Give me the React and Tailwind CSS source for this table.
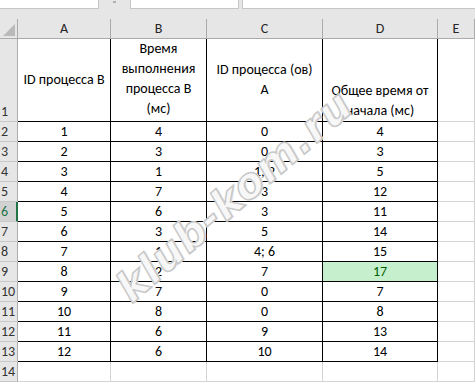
import React from "react";

const rows = [
  [1, 4, "0", 4],
  [2, 3, "0", 3],
  [3, 1, "1; 2", 5],
  [4, 7, "3", 12],
  [5, 6, "3", 11],
  [6, 3, "5", 14],
  [7, 1, "4; 6", 15],
  [8, 2, "7", 17],
  [9, 7, "0", 7],
  [10, 8, "0", 8],
  [11, 6, "9", 13],
  [12, 6, "10", 14],
];

function RowHead({ n, sel }) {
  return (
    <div
      className={
        sel
          ? "bg-[#d2d2d2] text-[#217346] border-b border-[#c8c8c8] border-r-2 border-r-[#217346] flex items-end pl-[1px] leading-[19px]"
          : "bg-[#e6e6e6] text-[#333333] border-b border-[#c8c8c8] border-r border-r-[#ababab] flex items-end pl-[1px] leading-[19px]"
      }
    >
      {n}
    </div>
  );
}

function Cell({ children, green }) {
  return (
    <div
      className={
        green
          ? "bg-[#c6efce] text-[#006100] border-r border-b border-black flex items-center justify-center leading-[19px]"
          : "border-r border-b border-black flex items-center justify-center leading-[19px]"
      }
    >
      {children}
    </div>
  );
}

function Empty() {
  return <div className="border-r border-b border-[#d4d4d4]" />;
}

export default function App() {
  return (
    <div className="relative w-[475px] h-[382px] overflow-hidden bg-white text-black text-[14px] font-['Carlito','Roboto',sans-serif]">
      {/* top strip */}
      <div className="flex h-[9px] bg-[#e6e6e6]">
        <div className="w-[99px] bg-white border-r border-b border-[#c6c6c6]" />
        <div className="w-[31px] flex items-start justify-center">
          <div className="w-[3px] h-[2px] bg-[#b0b0b0] mt-[1px]" />
        </div>
        <div className="w-[109px] bg-white border-l border-r border-b border-[#c6c6c6]" />
        <div className="w-[3px]" />
        <div className="flex-1 bg-white border-l border-b border-[#c6c6c6]" />
      </div>
      <div className="h-[10px] bg-[#e6e6e6]" />

      {/* grid */}
      <div className="grid grid-cols-[18px_93px_96px_116px_115px_1fr] grid-rows-[20px_83px_repeat(13,20px)]">
        {/* header row */}
        <div className="relative bg-[#e6e6e6] border-r border-b border-[#ababab]">
          <div className="absolute right-[2px] bottom-[2px] w-0 h-0 border-l-[12px] border-l-transparent border-b-[12px] border-b-[#b9b9b9]" />
        </div>
        {["A", "B", "C", "D", "E"].map((c) => (
          <div
            key={c}
            className="bg-[#e6e6e6] text-[#262626] border-r border-b border-[#ababab] flex items-center justify-center leading-[19px]"
          >
            {c}
          </div>
        ))}

        {/* row 1 */}
        <RowHead n={1} />
        <div className="border-r border-b border-black flex items-center justify-center text-center leading-[20px]">
          ID процесса B
        </div>
        <div className="border-r border-b border-black flex items-start justify-center text-center leading-[20px]">
          <span>
            Время
            <br />
            выполнения
            <br />
            процесса B
            <br />
            (мс)
          </span>
        </div>
        <div className="border-r border-b border-black flex items-center justify-center text-center leading-[20px]">
          <span>
            ID процесса (ов)
            <br />A
          </span>
        </div>
        <div className="border-r border-b border-black flex items-end justify-center text-center leading-[20px]">
          <span>
            Общее время от
            <br />
            начала (мс)
          </span>
        </div>
        <Empty />

        {rows.map((r, i) => (
          <React.Fragment key={i}>
            <RowHead n={i + 2} sel={i + 2 === 6} />
            <Cell>{r[0]}</Cell>
            <Cell>{r[1]}</Cell>
            <Cell>{r[2]}</Cell>
            <Cell green={i + 2 === 9}>{r[3]}</Cell>
            <Empty />
          </React.Fragment>
        ))}

        <RowHead n={14} />
        <Empty />
        <Empty />
        <Empty />
        <Empty />
        <Empty />
      </div>

      {/* watermark */}
      <div className="pointer-events-none absolute left-[234px] top-[196px] -translate-x-1/2 -translate-y-1/2 -rotate-[41deg] whitespace-nowrap text-[42px] font-bold italic tracking-[1px] text-white/75 [-webkit-text-stroke:1.5px_#c8c8c8] [text-shadow:1px_1px_0_#e0e0e0] font-['DejaVu_Sans',sans-serif]">
        klub-kom.ru
      </div>
    </div>
  );
}
